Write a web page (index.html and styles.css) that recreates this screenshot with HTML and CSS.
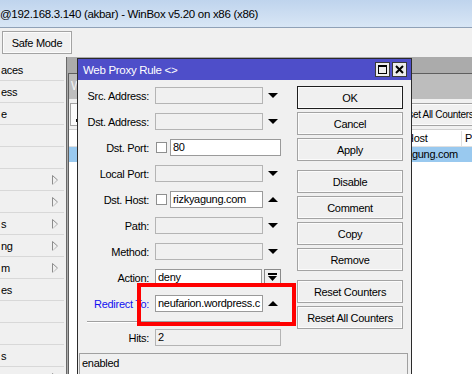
FILE: index.html
```html
<!DOCTYPE html>
<html lang="en">
<head>
    <meta charset="UTF-8">
    <title>WinBox - Web Proxy Rule</title>
    <link rel="stylesheet" href="styles.css">
</head>
<body>
    <div class="caption">@192.168.3.140 (akbar) - WinBox v5.20 on x86 (x86)</div>

    <div class="toolbar">
        <button class="btn safe-mode">Safe Mode</button>
    </div>

    <div class="main">
        <!-- left menu, clipped by the window edge -->
        <ul class="menu">
            <li>aces</li>
            <li>ess</li>
            <li>e</li>
            <li></li>
            <li></li>
            <li><span></span><svg class="arrow" width="6" height="10" viewBox="0 0 6 10"><path d="M.5 .5v9L5.5 5z" fill="none" stroke="#8c8c8c"/><path d="M.5 9.5L5.5 5" stroke="#e2e2e2"/></svg></li>
            <li><span></span><svg class="arrow" width="6" height="10" viewBox="0 0 6 10"><path d="M.5 .5v9L5.5 5z" fill="none" stroke="#8c8c8c"/><path d="M.5 9.5L5.5 5" stroke="#e2e2e2"/></svg></li>
            <li><span>s</span><svg class="arrow" width="6" height="10" viewBox="0 0 6 10"><path d="M.5 .5v9L5.5 5z" fill="none" stroke="#8c8c8c"/><path d="M.5 9.5L5.5 5" stroke="#e2e2e2"/></svg></li>
            <li><span>ng</span><svg class="arrow" width="6" height="10" viewBox="0 0 6 10"><path d="M.5 .5v9L5.5 5z" fill="none" stroke="#8c8c8c"/><path d="M.5 9.5L5.5 5" stroke="#e2e2e2"/></svg></li>
            <li><span>m</span><svg class="arrow" width="6" height="10" viewBox="0 0 6 10"><path d="M.5 .5v9L5.5 5z" fill="none" stroke="#8c8c8c"/><path d="M.5 9.5L5.5 5" stroke="#e2e2e2"/></svg></li>
            <li>es</li>
            <li></li>
            <li></li>
            <li>s</li>
            <li><span></span><svg class="arrow" width="6" height="10" viewBox="0 0 6 10"><path d="M.5 .5v9L5.5 5z" fill="none" stroke="#8c8c8c"/><path d="M.5 9.5L5.5 5" stroke="#e2e2e2"/></svg></li>
        </ul>

        <div class="workspace">
            <!-- list window behind the dialog -->
            <div class="window list-window">
                <div class="list-title">W</div>
                <div class="list-toolbar">
                    <button class="btn tool-add"><span class="add-mark"></span></button>
                    <button class="btn counters">Reset All Counters</button>
                </div>
                <div class="grid">
                    <div class="cell head"></div>
                    <div class="cell head">Dst. Host</div>
                    <div class="cell head">Path</div>

                    <div class="cell sel"></div>
                    <div class="cell sel">rizkyagung.com</div>
                    <div class="cell sel"></div>
                </div>
            </div>

            <!-- rule dialog -->
            <div class="window dialog">
                <div class="dialog-title">
                    <span>Web Proxy Rule &lt;&gt;</span>
                    <div class="title-buttons">
                        <span class="tbtn">
                            <svg width="13" height="13" viewBox="0 0 13 13"><rect x="2.5" y="2.5" width="8" height="8" fill="none" stroke="#000"/><rect x="2" y="2" width="9" height="2" fill="#000"/></svg>
                        </span>
                        <span class="tbtn">
                            <svg width="13" height="13" viewBox="0 0 13 13"><path d="M3 3l7 7M10 3l-7 7" stroke="#000" stroke-width="2"/></svg>
                        </span>
                    </div>
                </div>

                <div class="dialog-body">
                    <div class="dialog-main">
                        <div class="form">
                            <div class="row">
                                <label>Src. Address:</label>
                                <span class="field off"></span>
                                <span class="tri down"></span>
                            </div>
                            <div class="row">
                                <label>Dst. Address:</label>
                                <span class="field off"></span>
                                <span class="tri down"></span>
                            </div>
                            <div class="row">
                                <label>Dst. Port:</label>
                                <span class="check"></span>
                                <span class="field port">80</span>
                            </div>
                            <div class="row">
                                <label>Local Port:</label>
                                <span class="field off"></span>
                                <span class="tri down"></span>
                            </div>
                            <div class="row">
                                <label>Dst. Host:</label>
                                <span class="check"></span>
                                <span class="field host">rizkyagung.com</span>
                                <span class="tri up"></span>
                            </div>
                            <div class="row">
                                <label>Path:</label>
                                <span class="field off"></span>
                                <span class="tri down"></span>
                            </div>
                            <div class="row">
                                <label>Method:</label>
                                <span class="field off"></span>
                                <span class="tri down"></span>
                            </div>
                            <div class="row">
                                <label>Action:</label>
                                <span class="field action">deny</span>
                                <span class="pick">
                                    <svg width="9" height="9" viewBox="0 0 9 9"><rect x="0" y="0" width="9" height="2" fill="#000"/><path d="M0 3h9l-4.5 5z" fill="#000"/></svg>
                                </span>
                            </div>
                            <div class="row">
                                <label class="changed">Redirect To:</label>
                                <span class="field">neufarion.wordpress.c</span>
                                <span class="tri up"></span>
                            </div>
                            <div class="separator"></div>
                            <div class="row last">
                                <label>Hits:</label>
                                <span class="field off full">2</span>
                            </div>
                        </div>

                        <div class="actions">
                            <button class="btn default">OK</button>
                            <button class="btn">Cancel</button>
                            <button class="btn">Apply</button>
                            <button class="btn group">Disable</button>
                            <button class="btn">Comment</button>
                            <button class="btn">Copy</button>
                            <button class="btn">Remove</button>
                            <button class="btn group">Reset Counters</button>
                            <button class="btn">Reset All Counters</button>
                        </div>
                    </div>

                    <div class="status">enabled</div>
                </div>

                <!-- red annotation around the redirect field -->
                <div class="mark"></div>
            </div>
        </div>
    </div>
</body>
</html>
```

FILE: styles.css
```css
* {
    margin: 0;
    padding: 0;
    box-sizing: border-box;
}

body {
    font-family: 'Liberation Sans', Arial, sans-serif;
    font-size: 11px;
    letter-spacing: -0.3px;
    color: #000;
    background: #f0f0f0;
    height: 100vh;
    overflow: hidden;
}

/* Main window caption */
.caption {
    height: 28px;
    padding-top: 8px;
    font-size: 11.5px;
    white-space: nowrap;
    background: linear-gradient(#bfd4ed, #d8e6f5);
    border-bottom: 1px solid #8fa1b7;
}

.toolbar {
    height: 29px;
    padding: 3px 2px;
    background: #f0f0f0;
}

.btn {
    font: inherit;
    letter-spacing: inherit;
    color: #000;
    background: #f0f0f0;
    border: 1px solid #a3a3a3;
    box-shadow: inset 0 0 0 1px #fbfbfb;
}

.safe-mode {
    width: 70px;
    height: 23px;
}

.main {
    display: flex;
    height: calc(100vh - 57px);
}

/* Side menu */
.menu {
    width: 67px;
    flex-shrink: 0;
    list-style: none;
    padding-top: 2px;
    background: #f0f0f0;
    border-right: 1px solid #696969;
}

.menu li {
    height: 22px;
    margin-right: 2px;
    padding: 0 6px 0 1px;
    display: flex;
    align-items: center;
    justify-content: space-between;
    border-bottom: 1px solid #d8d8d8;
}

.arrow {
    flex-shrink: 0;
}

/* MDI area */
.workspace {
    flex: 1;
    position: relative;
    overflow: hidden;
    background: #ababab;
}

.window {
    position: absolute;
    border: 1px solid #5e5e5e;
}

.list-window {
    left: 1px;
    top: 16px;
    width: 500px;
    bottom: -10px;
    background: #fff;
}

.list-title {
    height: 25px;
    padding: 5px 2px;
    color: #f4f4f4;
    font-size: 12px;
    background: #bdbdbd;
}

.list-toolbar {
    height: 31px;
    display: flex;
    align-items: center;
    padding-left: 1px;
    background: #f0f0f0;
    border-bottom: 1px solid #d0d0d0;
}

.tool-add {
    width: 26px;
    height: 23px;
    flex-shrink: 0;
    background: #fbfbfb;
}

.add-mark {
    display: block;
    width: 3px;
    height: 3px;
    margin: 12px 0 0 5px;
    background: #111;
}

.counters {
    height: 23px;
    flex-shrink: 0;
    white-space: nowrap;
    padding: 0 6px;
    margin-left: 293px;
    font-size: 10px;
}

.grid {
    display: grid;
    grid-template-columns: 313px 80px 1fr;
    margin-top: 1px;
}

.cell {
    height: 15px;
    line-height: 15px;
    padding-left: 3px;
    white-space: nowrap;
    overflow: hidden;
}

.cell.head {
    height: 16px;
    background: #fff;
    border-right: 1px solid #e0e0e0;
    border-bottom: 1px solid #e0e0e0;
}

.cell.sel {
    background: #99c9ef;
}

/* Rule dialog */
.dialog {
    left: 10px;
    top: 1px;
    width: 335px;
    bottom: -20px;
    border-color: #2b2b2b;
    background: #f0f0f0;
}

.dialog-title {
    height: 21px;
    display: flex;
    align-items: center;
    justify-content: space-between;
    padding-left: 5px;
    padding-right: 4px;
    color: #fff;
    font-size: 11.5px;
    background: #4e4ec9;
}

.title-buttons {
    display: flex;
    gap: 2px;
}

.tbtn {
    width: 15px;
    height: 15px;
    display: flex;
    align-items: center;
    justify-content: center;
    background: #ececec;
    border: 1px solid #3a3a3a;
}

.dialog-main {
    display: flex;
    padding-bottom: 7px;
}

.form {
    width: 203px;
    padding-top: 7px;
}

.row {
    height: 17px;
    margin-bottom: 9px;
    display: flex;
    align-items: center;
}

.row.last {
    margin-bottom: 0;
}

.row label {
    width: 77px;
    padding-right: 6px;
    text-align: right;
    white-space: nowrap;
}

.row label.changed {
    color: #1010f0;
}

.field {
    width: 108px;
    height: 17px;
    line-height: 15px;
    padding: 0 2px;
    white-space: nowrap;
    overflow: hidden;
    background: #fff;
    border: 1px solid #9a9a9a;
}

.field.off {
    background: #f0f0f0;
    border-color: #b4b4b4;
}

.field.port {
    width: 111px;
}

.field.host {
    width: 93px;
}

.field.action {
    width: 107px;
}

.field.full {
    width: 126px;
}

.check {
    width: 11px;
    height: 11px;
    margin: 0 3px 0 1px;
    background: #fff;
    border: 1px solid #8e8f8f;
}

.tri {
    width: 0;
    height: 0;
    margin-left: 5px;
    border-left: 5px solid transparent;
    border-right: 5px solid transparent;
}

.tri.down {
    border-top: 5px solid #000;
}

.tri.up {
    border-bottom: 5px solid #000;
}

.pick {
    width: 17px;
    height: 18px;
    margin-left: 2px;
    display: flex;
    align-items: center;
    justify-content: center;
    background: #f0f0f0;
    border: 1px solid #8a8a8a;
}

.separator {
    width: 193px;
    margin: 2px 0 6px 9px;
    border-top: 1px solid #a0a0a0;
    border-bottom: 1px solid #fff;
}

.actions {
    display: flex;
    flex-direction: column;
    gap: 3px;
    margin-left: 16px;
    padding-top: 6px;
}

.actions .btn {
    width: 106px;
    height: 23px;
}

.actions .btn.group {
    margin-top: 6px;
}

.btn.default {
    border-color: #1e1e1e;
}

.status {
    height: 22px;
    margin: 0 3px 0 1px;
    padding: 3px 2px;
    border-top: 1px solid #a0a0a0;
    border-left: 1px solid #a0a0a0;
    border-right: 1px solid #a0a0a0;
}

.mark {
    position: absolute;
    left: 59px;
    top: 224px;
    width: 159px;
    height: 43px;
    border: 4px solid #f00;
}
```
